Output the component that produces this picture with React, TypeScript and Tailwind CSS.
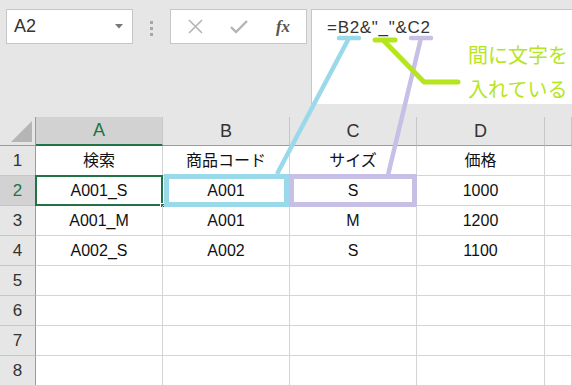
import React from "react";

const cols = ["A", "B", "C", "D", ""];

const rows: string[][] = [
  ["検索", "商品コード", "サイズ", "価格", ""],
  ["A001_S", "A001", "S", "1000", ""],
  ["A001_M", "A001", "M", "1200", ""],
  ["A002_S", "A002", "S", "1100", ""],
  ["", "", "", "", ""],
  ["", "", "", "", ""],
  ["", "", "", "", ""],
  ["", "", "", "", ""],
];

const font = { fontFamily: '"Liberation Sans", "Noto Sans CJK JP", sans-serif' };

function Toolbar() {
  return (
    <div className="flex h-[104px] pt-[9px] pl-[6px]">
      <div className="flex h-[35px] w-[127px] items-center justify-between border border-[#c6c6c6] bg-white pl-[7px] pr-[9px]">
        <span className="text-[18px] text-[#333]">A2</span>
        <svg width="8" height="5" viewBox="0 0 8 5">
          <path d="M0 0h8L4 4.5z" fill="#777" />
        </svg>
      </div>
      <div className="flex w-[37px] flex-col items-center gap-[3px] pt-[12px]">
        <span className="h-[3px] w-[3px] bg-[#a6a6a6]" />
        <span className="h-[3px] w-[3px] bg-[#a6a6a6]" />
        <span className="h-[3px] w-[3px] bg-[#a6a6a6]" />
      </div>
      <div className="flex h-[35px] w-[137px] items-center border border-[#c6c6c6] bg-white">
        <div className="flex w-[46px] justify-center pl-[2px]">
          <svg width="15" height="15" viewBox="0 0 15 15">
            <path d="M1 1l13 13M14 1L1 14" stroke="#b4b4b4" strokeWidth="1.6" />
          </svg>
        </div>
        <div className="flex w-[44px] justify-center">
          <svg width="18" height="14" viewBox="0 0 18 14">
            <path d="M1 7l5 5L17 1" stroke="#b4b4b4" strokeWidth="2.4" fill="none" />
          </svg>
        </div>
        <div className="flex w-[44px] justify-center">
          <span
            className="text-[17px] font-bold italic text-[#555]"
            style={{ fontFamily: '"Liberation Serif", serif' }}
          >
            fx
          </span>
        </div>
      </div>
      <div className="ml-[4px] flex-1 border-l border-t border-[#c6c6c6] bg-white pl-[15px] pt-[4px]">
        <div className="text-[17px] leading-[28px] tracking-[0.7px] text-[#333]">=B2&amp;"_"&amp;C2</div>
        <div className="ml-[141px] -mt-[3px] text-[20px] leading-[34px] text-[#b5e61d]">
          <div>間に文字を</div>
          <div>入れている</div>
        </div>
      </div>
    </div>
  );
}

function Sheet() {
  return (
    <div className="mt-[13px] grid grid-cols-[36px_127px_127px_127px_128px_1fr] grid-rows-[29px_repeat(8,30px)] bg-white">
      <div className="flex items-end justify-end border-b border-r border-[#9b9b9b] bg-[#e6e6e6] pb-[3px] pr-[3px]">
        <svg width="21" height="21" viewBox="0 0 21 21">
          <path d="M21 0v21H0z" fill="#b5b5b5" />
        </svg>
      </div>
      {cols.map((c, i) => (
        <div
          key={"h" + i}
          className={
            i === 0
              ? "flex items-center justify-center border-b-2 border-r border-b-[#217346] border-r-[#c6c6c6] bg-[#d2d2d2] text-[18px] text-[#217346]"
              : "flex items-center justify-center border-b border-r border-b-[#9b9b9b] border-r-[#c6c6c6] bg-[#e6e6e6] text-[18px] text-[#333]"
          }
        >
          {c}
        </div>
      ))}
      {rows.map((r, ri) => (
        <React.Fragment key={ri}>
          <div
            className={
              ri === 1
                ? "flex items-center justify-center border-b border-r border-b-[#c6c6c6] border-r-[#9b9b9b] bg-[#d2d2d2] text-[17px] text-[#217346]"
                : "flex items-center justify-center border-b border-r border-b-[#c6c6c6] border-r-[#9b9b9b] bg-[#e6e6e6] text-[17px] text-[#333]"
            }
          >
            {ri + 1}
          </div>
          {r.map((v, ci) => (
            <div
              key={ci}
              className="relative flex items-center justify-center border-b border-r border-[#d4d4d4] text-[16px] text-[#111]"
            >
              {v}
              {ri === 1 && ci === 0 && (
                <>
                  <div className="absolute -left-px -top-px bottom-[-1px] right-[-1px] border-2 border-[#217346]" />
                  <div className="absolute -bottom-[3px] -right-[3px] h-[5px] w-[5px] border border-white bg-[#217346]" />
                </>
              )}
              {ri === 1 && ci === 1 && (
                <div className="absolute -bottom-[2px] left-[1px] right-0 top-[-2px] border-[5px] border-[#99d9ea]" />
              )}
              {ri === 1 && ci === 2 && (
                <div className="absolute -bottom-[2px] -left-px -right-px top-[-2px] border-[5px] border-[#c8bfe7]" />
              )}
            </div>
          ))}
        </React.Fragment>
      ))}
    </div>
  );
}

export default function App() {
  return (
    <div className="relative h-[385px] w-[572px] overflow-hidden bg-[#e6e6e6]" style={font}>
      <Toolbar />
      <Sheet />
      <svg
        className="pointer-events-none absolute left-0 top-0"
        width="572"
        height="385"
        viewBox="0 0 572 385"
      >
        <g strokeLinecap="round" fill="none">
          <path d="M339 38h20" stroke="#99d9ea" strokeWidth="4.5" />
          <path d="M349 38L277 174" stroke="#99d9ea" strokeWidth="4.5" strokeLinecap="butt" />
          <path d="M411 38h20" stroke="#c8bfe7" strokeWidth="4.5" />
          <path d="M421 38L388 175" stroke="#c8bfe7" strokeWidth="4.5" strokeLinecap="butt" />
          <path d="M375 40h20" stroke="#b5e61d" strokeWidth="5" />
          <path d="M384 41L424 82H458" stroke="#b5e61d" strokeWidth="5" strokeLinejoin="round" />
        </g>
      </svg>
    </div>
  );
}
